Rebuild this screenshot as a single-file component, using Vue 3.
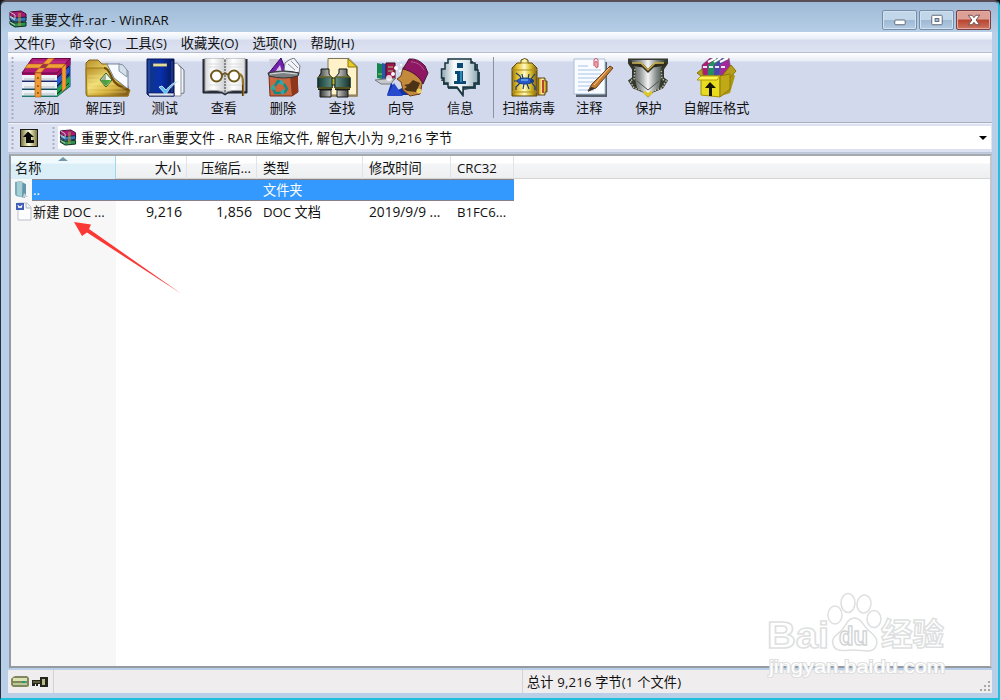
<template>
  <div class="window">
    <header class="titlebar">
      <svg class="app-icon" viewBox="0 0 20 18">
        <use href="#rar-books" />
      </svg>
      <h1 class="title">重要文件.rar - WinRAR</h1>
      <div class="controls">
        <button class="control" aria-label="minimize">
          <svg viewBox="0 0 34 19"><rect x="12" y="9.500" width="11" height="5" rx="1" fill="#fff" stroke="#5a6470" /></svg>
        </button>
        <button class="control" aria-label="maximize">
          <svg viewBox="0 0 34 19">
            <rect x="12" y="4.500" width="11" height="10" rx="1" fill="#fff" stroke="#5a6470" />
            <rect x="15.500" y="8" width="4" height="3" fill="#a9c0da" stroke="#5a6470" />
          </svg>
        </button>
        <button class="control close" aria-label="close">
          <svg viewBox="0 0 34 19">
            <path d="M11.500 4.500h4l2 2.500 2-2.500h4l-3.800 5 3.800 5h-4l-2-2.500-2 2.500h-4l3.800-5z" fill="#fff" stroke="#6b4a4d" />
          </svg>
        </button>
      </div>
    </header>

    <nav class="menu">
      <span v-for="item in menu" :key="item">{{ item }}</span>
    </nav>

    <div class="toolbar">
      <i class="grip"></i>
      <button class="tool">
        <svg viewBox="0 0 56 40">
          <path d="M38 14.500 51.500.5v28L38 39z" fill="#173f91" />
          <path d="M38 14.500 51.500.5v6L38 21z" fill="#9b1268" />
          <path d="m38 21 12-12v5L38 28z" fill="#2059d8" />
          <path d="m38 30 13-12v10L38 39z" fill="#1ca24d" />
          <path d="m38 20 12-12M38 28l12-12M38 36l12-11" stroke="#071829" />
          <path d="M3 15h35v24H3z" fill="#eef2f7" />
          <path d="M3 15h35v2H3z" fill="#a20b68" />
          <path d="M3 22.500h35v1.500H3z" fill="#1d2c70" />
          <path d="M3 30.500h35v1.500H3z" fill="#14485f" />
          <path d="M3 37.500h35v1.500H3z" fill="#237869" />
          <path d="M5 21h31M5 29h31M5 36h31" stroke="#b7bec8" />
          <path d="M13 .5h38.500L38 15H3z" fill="#b11a75" stroke="#690943" />
          <path d="M14 4h33" stroke="#d950a3" opacity=".6" />
          <path d="m29 .5-13 14h6L35 .5zM9 6h37l-3 4H6z" fill="#f0a13a" stroke="#b8660f" stroke-width=".6" />
          <path d="M16 15h6v24h-6zM43 10l4-4v24l-4 4z" fill="#f29b35" stroke="#aa5b15" stroke-width=".6" />
          <g fill="#805012"><circle cx="26" cy="8" r="1.500" /><circle cx="19" cy="20" r="1" /><circle cx="19" cy="28" r="1" /><circle cx="19" cy="35" r="1" /></g>
        </svg>
        添加
      </button>
      <button class="tool">
        <svg viewBox="0 0 56 40">
          <path d="M8 9V5l3-3h9l4 4h6l20 22v10H9l-1-2z" fill="url(#gold)" stroke="#806320" />
          <path d="M29 6h13l8 7v18L36 20z" fill="#f8fbff" stroke="#748396" />
          <path d="M41 6v7l8 6v-7l-4-5z" fill="#d6e0eb" stroke="#8493a2" />
          <path d="M8 10h18c4 0 5 4 8 10 3 7 10 10 18 12l-2 6H9z" fill="url(#gold)" stroke="#997719" />
          <path d="M26 10c4 0 5 4 8 10 3 7 10 10 17 12" fill="none" stroke="#6f4b0c" stroke-width="2" />
          <path d="M10 18h19M10 22h22M10 26h27M10 30h38M10 34h38" stroke="#fff6a8" stroke-width=".6" opacity=".6" />
          <path d="m28 15 6 7-6 7-6-7z" fill="#eefae6" stroke="#315d2b" />
          <path d="M22 22h11l-5 6z" fill="#43ad35" /><path d="m28 16-5 6 5 6z" fill="#648364" opacity=".6" />
        </svg>
        解压到
      </button>
      <button class="tool">
        <svg viewBox="0 0 56 40">
          <path d="m36 8 6-1 5 5v23l-11 2z" fill="#eff4fa" stroke="#69727e" />
          <path d="m34 6 6-1 4 5v28H34z" fill="#fff" stroke="#8c949e" />
          <path d="M10 1h27v37H12l-2-2z" fill="url(#bluebook)" stroke="#061758" />
          <path d="M11 35h26v3H12z" fill="#dfe4ec" stroke="#06175b" stroke-width=".7" />
          <path d="M12 2v32M35 3v31" stroke="#3c63b7" stroke-width=".8" />
          <path d="M16 7h14" stroke="#cabf70" stroke-width="3" /><path d="M17 7h12" stroke="#fff9bd" />
          <path d="m22 29 7 8c3-7 7-10 14-15-6 2-11 6-14 10l-4-4z" fill="#60bef5" stroke="#fff" stroke-width=".7" />
        </svg>
        测试
      </button>
      <button class="tool">
        <svg viewBox="0 0 56 40">
          <path d="M7 1v34h19l3 2 3-2h19V1" fill="#30323b" stroke="#20222b" />
          <path d="M9 0h18l2 2 2-2h18v33q-14-2-20 2-6-4-20-2z" fill="url(#page)" stroke="#9ea1a9" />
          <path d="M29 2v32" stroke="#35363e" stroke-dasharray="2 1" />
          <path d="M11 6h14M11 9h14M11 27h14M33 6h14M33 9h14M33 27h14" stroke="#d9dce0" />
          <g fill="#fff" fill-opacity=".8" stroke="#6d581d" stroke-width="2"><circle cx="20.500" cy="18" r="5.500" /><circle cx="38" cy="18" r="5.500" /><path d="M26 17q3-3 6 0" fill="none" /></g>
          <path d="M43 16q4 0 4 9v13" fill="none" stroke="#91752b" stroke-width="2.200" />
          <path d="M46.500 27v11" stroke="#55410d" />
        </svg>
        查看
      </button>
      <button class="tool">
        <svg viewBox="0 0 56 40">
          <path d="M14 1h11l-9 11z" fill="#cfd0dc" /><path d="m26 0 6 16H13z" fill="#7122ac" stroke="#3c0667" /><path d="m25 7 2 7h-7z" fill="#dfc8ec" />
          <path d="m29 13 1-8 4-3 5-2 6 8-1 7z" fill="#f1f3f8" stroke="#74797e" /><path d="m33 6 7 6M36 3l7 7" stroke="#8793a1" />
          <path d="m14 18 28-1 1 17-6 4H15z" fill="#cb663d" stroke="#70301b" />
          <path d="m35 18 8-2v18l-6 4z" fill="#8e351c" />
          <path d="M13 15q15-4 31 0l-1 3q-14 4-29 0z" fill="#7c8083" stroke="#303337" />
          <path d="M15 16q13-3 27 0" stroke="#d9dfe0" fill="none" />
          <g fill="none" stroke="#138989" stroke-width="2.500"><path d="m20 28 3-5 4 2M29 26l3 5-3 4M26 35h-6l-2-5" /></g>
          <path d="m27 21 2 6-6-1zM18 26l-3 5 6 1zM29 31v6l-4-3z" fill="#26acaa" />
        </svg>
        删除
      </button>
      <button class="tool">
        <svg viewBox="0 0 56 40">
          <path d="M14 .5h21l8 8V37H14z" fill="#fff1c8" stroke="#7e7555" />
          <path d="M34 1v8h9z" fill="#e8cd24" stroke="#8c7710" /><path d="M43 9v29H16" fill="none" stroke="#8c784e" stroke-width="1.500" />
          <path d="M7 11h8v5l3 4v10H4V20l3-5zM25 11h8v5l3 4v10H21V20l4-5z" fill="url(#metal)" stroke="#061512" />
          <path d="M17 20h6v7h-6z" fill="#c8b528" stroke="#262308" />
          <path d="M4 19h14v11H4zM21 19h15v11H21z" fill="url(#binocular)" stroke="#10251f" />
          <path d="M4 29h14v3H4zM21 29h15v3H21z" fill="#171f16" />
          <path d="M6 32h11v7H6zM23 32h11v7H23z" fill="url(#metal)" stroke="#17191b" />
          <path d="M4 19h14M21 19h15M4 30h14M21 30h15" stroke="#91822a" />
        </svg>
        查找
      </button>
      <button class="tool">
        <svg viewBox="0 0 56 40">
          <path d="m4 5 5 1v15l-5-1z" fill="#15854f" /><path d="m9 5 4 1v15H9z" fill="#2955ac" /><path d="M13 5h9v16h-9z" fill="#9d164c" stroke="#3c1020" />
          <path d="M5 16h4M15 9h5M15 13h5" stroke="#a8c974" />
          <path d="m2 22 20-2-4 6H8z" fill="#c7c8cb" stroke="#777a80" />
          <path d="m18 25-4 12h32l3-8-14-2-10 5z" fill="#1231a7" /><path d="m21 25 9 13H14z" fill="#284ace" />
          <path d="M30 10c3-6 16-3 20 11l-3 15-10 2-7-6-2-8-4-3 4-3z" fill="#c38a3b" stroke="#6d3f1d" />
          <path d="m31 27 5-1 4-4 7 3-4 9-9-1-3-2 3-2z" fill="#4c3217" />
          <path d="m30 11 6-10q9-1 16 7l3 7-5 11c-3-7-11-13-20-15z" fill="#8e1662" stroke="#4b1636" />
          <path d="M38 4c6 0 10 3 13 8" stroke="#b15a83" fill="none" /><circle cx="46" cy="33" r="2.500" fill="#edce5c" />
          <g fill="#fff"><circle cx="25" cy="3" r="1" /><circle cx="28" cy="7" r="1" /><circle cx="23" cy="10" r="2" /><circle cx="27" cy="13" r="1" /><circle cx="20" cy="16" r="2" /><circle cx="16" cy="20" r="3" opacity=".8" /></g>
        </svg>
        向导
      </button>
      <button class="tool">
        <svg viewBox="0 0 56 40">
          <path d="M17 3h24v3h5v8h2v13h-4v4h-6l-6 1-1 7-6-8h-9v-4h-5v-4h-2z" fill="#2d4c56" />
          <path d="M16 1h23v4h4v7h3v13h-4v4H31v8l-6-8h-9v-4h-4v-5H9.500v-9H13V5h3z" fill="url(#info)" stroke="#19343e" stroke-width="1.500" />
          <path d="M25 5h6v5h-6zM23 13h8v10h3v3H22v-3h3v-7h-2z" fill="#0b4976" /><path d="M29 13v11" stroke="#2e8cb7" stroke-width="2" />
        </svg>
        信息
      </button>
      <i class="separator"></i>
      <button class="tool scan">
        <svg viewBox="0 0 56 40">
          <path d="M20 2q4-3 7 0v3h4l5 5v28H11V10l5-5h4z" fill="url(#canister)" stroke="#5d4b0b" />
          <path d="M17 5h13M11 12h25M11 34h25" stroke="#a98b24" /><path d="M37 20h7v3h2v11h-2v3h-7z" fill="url(#canister)" stroke="#64431b" /><path d="M42 22v13" stroke="#b84431" stroke-width="2" />
          <g fill="none" stroke="#183b76" stroke-width="1.200"><path d="m15 15 4 3 1 3m-1 4-4 4v3M22 21l-1-5m2 10-1 5M27 21l1-5m-2 10 2 5M30 21l4-5m-3 9 3 4v3M20 23h-7" /></g>
          <ellipse cx="24" cy="23" rx="8" ry="3" fill="#2858ce" stroke="#173d83" /><path d="M20 22h7" stroke="#8bdcf7" /><circle cx="31" cy="23" r="2" fill="#173d83" />
        </svg>
        扫描病毒
      </button>
      <button class="tool">
        <svg viewBox="0 0 56 40">
          <path d="M15 4h31v35H15z" fill="#56616b" /><path d="M13 1h31v35H13z" fill="#f8fbff" stroke="#aac1d6" />
          <path d="M17 8h10M17 12h23M17 16h23M17 20h22M17 24h20M17 28h18M17 32h16" stroke="#a8c4e4" />
          <path d="M33 8V2q2-4 4 0v7q-2 2-3-1V4q2-2 2 1v4" fill="none" stroke="#d14f5d" />
          <path d="m49 8 3 2-17 20-8 3 4-7z" fill="#c47c32" stroke="#65401d" /><path d="m33 27 15-17" stroke="#ffd291" /><path d="m30 29 4 1-7 4z" fill="#30302f" />
        </svg>
        注释
      </button>
      <button class="tool">
        <svg viewBox="0 0 56 40">
          <path d="M8 .5h40v5l-4 6v8l4 3-5 8-10 4-5 5-5-5-10-4-5-8 4-3v-8l-4-6z" fill="#34382e" />
          <path d="M11 2h34l-5 10 1 8-2 10-11 7-11-7-2-10 1-8z" fill="url(#shield)" />
          <path d="m10 6 13 2 5 5 5-5 13-2" fill="none" stroke="#302c1c" stroke-width="3" /><path d="M12 5h9l7 7 7-7h9" fill="none" stroke="#c8ac48" stroke-width="1.500" />
          <path d="m15 11-1 10-4 2 4 7 9 3 5 5 5-5 9-3 4-7-4-2-1-10" fill="none" stroke="#b9bda4" stroke-width="1.500" stroke-dasharray="1.500 1.500" />
          <path d="m17 23 11 9 11-9" fill="none" stroke="#4c514d" />
          <path d="m24 34 4 3 4-3" stroke="#ddc827" stroke-width="3" fill="none" />
        </svg>
        保护
      </button>
      <button class="tool sfx">
        <svg viewBox="0 0 56 40">
          <path d="m14 17 26-6 7 7-5 17-12 4-17-2z" fill="#aa9610" />
          <g stroke="#6b5a70" stroke-width=".6"><path d="m14 7 8-7 6 2-9 16h-5z" fill="#a71e77" /><path d="m20 7 8-7 5 2-8 16h-5z" fill="#1d9260" /><path d="m26 7 8-7 5 2-8 16h-5z" fill="#4b44af" /><path d="m32 7 9-7 2 12-7 6h-4z" fill="#a3299a" /></g>
          <path d="m20 4 8-4M26 4l7-4M32 4l8-4" stroke="#fff" stroke-width="2" /><path d="M15 9h4M21 9h4M27 9h4M33 9h4" stroke="#e6e8fa" stroke-width="2" />
          <path d="m13 18-4-3 5-4 1 6zM34 18l9-11 5 6-7 8z" fill="#b69d1b" stroke="#897708" />
          <path d="M13 18h19v21l-19-2z" fill="#e9dc1f" stroke="#a59405" /><path d="m32 18 10-2v15l-10 8z" fill="#c0a916" stroke="#8e7a0c" />
          <path d="m9 22 4-4h19l-3 4z" fill="#fff34d" stroke="#b0990d" /><path d="m22 24 6 6h-4v8h-3v-8h-4z" fill="#171608" />
        </svg>
        自解压格式
      </button>
    </div>

    <div class="addressbar">
      <i class="grip"></i>
      <button class="up" aria-label="up">
        <svg viewBox="0 0 18 18">
          <path d="M0 0h18v18H0z" fill="url(#upfill)" stroke="#191b13" stroke-width="2" />
          <path d="m8 2.500-5 5.500h3v6h8v-3h-3V8h3z" fill="#090a06" />
        </svg>
      </button>
      <i class="grip"></i>
      <div class="path">
        <svg viewBox="0 0 20 18"><use href="#rar-books" /></svg>
        <span>重要文件.rar\重要文件 - RAR 压缩文件, 解包大小为 9,216 字节</span>
        <i class="dropdown"></i>
      </div>
    </div>

    <main class="list">
      <div class="columns header">
        <span v-for="(column, i) in columns" :key="column" :class="{ number: i === 1 || i === 2 }">{{ column }}</span>
        <i class="sort-mark"></i>
      </div>
      <div class="columns row selected">
        <span class="name">
          <svg class="file-icon" viewBox="0 0 20 20">
            <path d="m3 3 6-1 4 3v14l-9-2-1-2z" fill="#76aebb" /><path d="m5 3 5-1v16l-5-2z" fill="#a6ced4" /><path d="m11 4 3 1v12l-4 1z" fill="#6298aa" /><path d="m12 14 4 4h-5z" fill="#c6d1d5" />
          </svg>
          <b>..</b>
        </span>
        <span class="number"></span><span class="number"></span><span>文件夹</span><span></span><span></span>
      </div>
      <div class="columns row">
        <span class="name">
          <svg class="file-icon" viewBox="0 0 20 20">
            <path d="M6 2h9l4 4v13H6z" fill="#fcfdff" stroke="#bbc1cb" /><path d="M14 2v5h5" fill="#edf0f4" stroke="#b0b6c2" /><path d="M4 2h8v7H4z" fill="#405fb7" /><path d="m6 4 1 3 1-2 1 2 1-3" stroke="#fff" fill="none" />
          </svg>
          <b>新建 DOC ...</b>
        </span>
        <span class="number">9,216</span><span class="number">1,856</span><span>DOC 文档</span><span class="date">2019/9/9 ...</span><span>B1FC6...</span>
      </div>
      <div class="sorted-column"></div>
    </main>

    <footer class="status">
      <div class="status-icons">
        <svg viewBox="0 0 42 16">
          <path d="m3 3 2-1h12l2 2v8l-2 1H3l-2-2V5z" fill="#82885c" /><path d="M3 4h14v3H3z" fill="#dde2b4" /><path d="M3 9h14v2H3z" fill="#b8c995" /><path d="M12 8h3" stroke="#14a27c" stroke-width="2" />
          <path d="M22 6h8V3h8v10h-8v-3h-2v2h-2v-2h-1v2h-3z" fill="#24251c" /><path d="M32 5h3v6h-3z" fill="#b9bd85" /><path d="M23 8h7" stroke="#9f9560" />
        </svg>
      </div>
      <div class="status-left"></div>
      <div class="status-text">总计 9,216 字节(1 个文件)</div>
      <svg class="resize" viewBox="0 0 12 12"><path d="M9 1h2v2H9zM5 5h2v2H5zM9 5h2v2H9zM1 9h2v2H1zM5 9h2v2H5zM9 9h2v2H9z" fill="#aaa7a7" /></svg>
    </footer>

    <svg class="pointer" viewBox="0 0 110 75"><path d="m0 0 17 2.500-2 4.500 92 64.500L13 10.500 8 14z" fill="#fa3937" /></svg>

    <svg class="watermark" viewBox="0 0 184 92">
      <g class="mark">
        <text x="1" y="58" font-size="37" textLength="62" lengthAdjust="spacingAndGlyphs">Bai</text>
        <ellipse cx="69" cy="25" rx="7" ry="9" /><ellipse cx="82" cy="13" rx="7" ry="9.500" /><ellipse cx="98" cy="14" rx="7" ry="9" transform="rotate(8 98 14)" /><ellipse cx="108" cy="29" rx="7" ry="8.500" />
        <path d="M88 28c7 0 9 7 14 12 6 5 11 9 8 16-3 8-13 4-22 4s-19 3-21-6c-2-7 4-9 9-14 4-5 6-12 12-12z" />
        <text class="du" x="73" y="55" font-size="25" textLength="29" lengthAdjust="spacingAndGlyphs">du</text>
        <text class="chinese" x="115" y="55" font-size="31" textLength="63" lengthAdjust="spacingAndGlyphs">经验</text>
        <text class="site" x="3" y="83" font-size="18" textLength="176" lengthAdjust="spacingAndGlyphs">jingyan.baidu.com</text>
      </g>
    </svg>

    <svg class="defs" aria-hidden="true">
      <defs>
        <g id="rar-books">
          <path d="m2 2 11-1 5 3v4L7 9 2 6z" fill="#a91872" stroke="#410a2e" />
          <path d="m2 6 5 2 11-1v4L7 12 2 10z" fill="#3474b9" stroke="#11263f" />
          <path d="m2 11 5 2 11-1v4L7 17l-5-3z" fill="#2c9352" stroke="#092c18" />
          <path d="m2 2 5 3v4L2 6M2 7l5 3M2 12l5 3" stroke="#c3c8cc" fill="none" /><path d="M10 3h3v13h-3z" fill="#b79a4b" fill-opacity=".55" />
        </g>
        <linearGradient id="gold" x2=".8" y2="1"><stop stop-color="#b88d26" /><stop offset=".45" stop-color="#f0dd74" /><stop offset=".75" stop-color="#cfa935" /><stop offset="1" stop-color="#86611c" /></linearGradient>
        <linearGradient id="bluebook" x2="1"><stop stop-color="#123580" /><stop offset=".5" stop-color="#0830ad" /><stop offset="1" stop-color="#061759" /></linearGradient>
        <linearGradient id="page"><stop stop-color="#d6d7d9" /><stop offset=".2" stop-color="#fff" /><stop offset=".48" stop-color="#d1d2d4" /><stop offset=".7" stop-color="#fff" /><stop offset="1" stop-color="#dedee0" /></linearGradient>
        <linearGradient id="metal"><stop stop-color="#313333" /><stop offset=".5" stop-color="#f4f4ed" /><stop offset="1" stop-color="#414342" /></linearGradient>
        <linearGradient id="binocular"><stop stop-color="#153b35" /><stop offset=".5" stop-color="#6a9990" /><stop offset="1" stop-color="#16332e" /></linearGradient>
        <linearGradient id="info"><stop stop-color="#91a7b2" /><stop offset=".35" stop-color="#fafdff" /><stop offset=".7" stop-color="#dce5eb" /><stop offset="1" stop-color="#91a9b4" /></linearGradient>
        <linearGradient id="canister"><stop stop-color="#977416" /><stop offset=".2" stop-color="#e1bd28" /><stop offset=".5" stop-color="#fffac0" /><stop offset=".75" stop-color="#d6ba26" /><stop offset="1" stop-color="#7f6016" /></linearGradient>
        <linearGradient id="shield"><stop stop-color="#474f4e" /><stop offset=".25" stop-color="#8f9492" /><stop offset=".5" stop-color="#f4f4f4" /><stop offset=".75" stop-color="#858c89" /><stop offset="1" stop-color="#37423c" /></linearGradient>
        <linearGradient id="upfill"><stop stop-color="#67602c" /><stop offset=".5" stop-color="#ffffda" /><stop offset="1" stop-color="#706830" /></linearGradient>
      </defs>
    </svg>
  </div>
</template>

<script setup>
const menu = ['文件(F)', '命令(C)', '工具(S)', '收藏夹(O)', '选项(N)', '帮助(H)'];
const columns = ['名称', '大小', '压缩后...', '类型', '修改时间', 'CRC32'];
</script>

<style>
body {
  margin: 0;
  background: #10171f;
}
</style>

<style scoped>
* {
  box-sizing: border-box;
}

.window {
  position: relative;
  width: 1000px;
  height: 700px;
  padding: 0 6px 8px 7px;
  display: flex;
  flex-direction: column;
  border: 1px solid #25313d;
  border-top: 2px solid #594e55;
  border-right: 2px solid #20c0df;
  border-bottom: 2px solid #20bfdc;
  border-radius: 6px 6px 0 0;
  background: linear-gradient(#9eb9d6, #b8cfe7 32px, #b8cfe7 60px, #b9cfe8);
  font: 13.200px/20px "Open Sans", "Noto Sans CJK SC", sans-serif;
  color: #111;
  overflow: hidden;
}

.window > * {
  flex-shrink: 0;
}

button {
  padding: 0;
  border: 0;
  background: none;
  font: inherit;
  color: inherit;
}

svg {
  display: block;
}

.titlebar {
  height: 30px;
  display: flex;
  align-items: flex-start;
}

.app-icon {
  width: 20px;
  height: 18px;
  margin-top: 8px;
}

.title {
  margin: 8px 0 0 3px;
  font-size: 13.200px;
  font-weight: 400;
  line-height: 20px;
  letter-spacing: 0.250px;
}

.controls {
  display: flex;
  gap: 2px;
  margin: 8px 1px 0 auto;
}

.control {
  width: 35px;
  height: 20px;
  border: 1px solid #758da6;
  border-radius: 2px;
  background: linear-gradient(#c2d6ea 48%, #9db8d3 50%, #b4cce3);
  box-shadow: inset 0 0 0 1px #d2e1ef;
}

.control svg {
  width: 33px;
  height: 18px;
}

.close {
  border-color: #773e43;
  background: linear-gradient(#dda097 45%, #b9442f 50%, #cb7560);
  box-shadow: inset 0 0 0 1px #e5aba3;
}

.menu {
  height: 20px;
  padding: 1px 6px;
  display: flex;
  gap: 14px;
  background: linear-gradient(#fcfdff, #e8edf7 7px, #d5dbed 8px, #dee3f2);
}

.toolbar {
  height: 71px;
  display: flex;
  border-top: 1px solid #b7bdcf;
  border-bottom: 1px solid #a9afbd;
  background: linear-gradient(#fff 0, #e7ebf6 8px, #d3d9ed 9px, #d3d9ed);
}

.grip {
  width: 3px;
  margin: 3px;
  background: radial-gradient(circle, #a4acbf 1px, transparent 1.200px) 0 0 / 3px 4px;
}

.tool {
  width: 59.100px;
  padding-top: 5px;
  display: flex;
  flex-direction: column;
  align-items: center;
  line-height: 20px;
  white-space: nowrap;
}

.tool svg {
  width: 56px;
  height: 40px;
}

.separator {
  width: 1px;
  margin: 4px 4px 4px 3px;
  background: #8c929f;
}

.scan {
  width: 62px;
}

.sfx {
  width: 77px;
}

.addressbar {
  height: 30px;
  padding: 2px 0 3px;
  display: flex;
  align-items: stretch;
  border-top: 1px solid #f1f3fc;
  border-bottom: 1px solid #c1c5d3;
  background: #dce2f2;
}

.addressbar .grip {
  margin-top: 0;
  margin-bottom: 0;
}

.up {
  width: 32px;
  padding-left: 3px;
}

.up svg {
  width: 18px;
  height: 18px;
}

.path {
  flex: 1;
  display: flex;
  align-items: center;
  background: #fff;
  border-right: 1px solid #e3e5e8;
}

.path span {
  letter-spacing: 0.200px;
}

.path svg {
  width: 20px;
  height: 17px;
  margin-right: 3px;
}

.dropdown {
  margin: 0 4px 0 auto;
  border: 4px solid transparent;
  border-top: 4px solid #000;
  border-bottom: 0;
}

.list {
  position: relative;
  height: 514px;
  display: flex;
  flex-direction: column;
  margin: 1px 0 0 1px;
  border: 2px solid #9599a1;
  border-top: 2px solid #a8a9ab;
  border-right: 2px solid #c3c6ca;
  background: #fff;
}

.columns {
  display: grid;
  grid-template-columns: 105px 71px 70px 106px 88px 63px 1fr;
  height: 22px;
  line-height: 22px;
}

.columns > span {
  padding: 0 6px;
  white-space: nowrap;
}

.columns .number {
  padding-right: 5px;
  text-align: right;
}

.row .number {
  font-size: 14.200px;
}

.row .date {
  font-size: 13.700px;
}

.header {
  height: 23px;
  line-height: 24px;
  background: linear-gradient(#fff 7px, #f4f5f6 8px, #eeeff1);
  border-bottom: 1px solid #d5d5d5;
}

.header > span {
  border-right: 1px solid #e1e3e6;
}

.header > span:first-child {
  padding-left: 4px;
  background: linear-gradient(#f0f9fd 7px, #dceff9 8px, #d9eef8);
  border-color: #a5d5e8;
}

.sort-mark {
  position: absolute;
  top: 1px;
  left: 47px;
  border: 5px solid transparent;
  border-top: 0;
  border-bottom: 4px solid #7599aa;
}

.columns > .name {
  display: flex;
  padding: 0 0 0 1px;
  background: #f7f7f7;
}

.name b {
  flex: 1;
  font-weight: 400;
  padding-left: 1px;
}

.file-icon {
  width: 20px;
  height: 20px;
}

.selected > span:nth-child(n + 2):nth-child(-n + 6),
.selected b {
  background: #3399fe;
  color: #fff;
  border-top: 1px solid #88818a;
  border-bottom: 1px solid #88818a;
}

.selected {
  line-height: 20px;
}

.sorted-column {
  flex: 1;
  width: 105px;
  background: #f7f7f7;
}

.status {
  height: 23px;
  margin-top: 2px;
  display: flex;
  background: #f0edee;
}

.status-icons {
  width: 46px;
  padding: 4px 0 0 2px;
  border-right: 1px solid #d4d2d2;
}

.status-icons svg {
  width: 42px;
  height: 16px;
}

.status-left {
  width: 469px;
  border-right: 1px solid #d4d2d2;
}

.status-text {
  padding: 2px 4px;
  letter-spacing: 0.150px;
}

.resize {
  width: 12px;
  height: 12px;
  margin: 10px 1px 0 auto;
}

.pointer {
  position: absolute;
  left: 73px;
  top: 220px;
  width: 110px;
  height: 75px;
}

.watermark {
  position: absolute;
  left: 765px;
  top: 588px;
  width: 184px;
  height: 92px;
}

.mark {
  fill: #fff;
  stroke: #dedfe0;
  stroke-width: 1.500px;
  font-family: "Liberation Sans", sans-serif;
  font-weight: 700;
}

.du {
  stroke: #d3d4d5;
}

.chinese {
  font-family: "Noto Sans CJK SC", sans-serif;
}

.site {
  font-weight: 400;
  stroke-width: 2px;
  paint-order: stroke;
}

.defs {
  position: absolute;
  width: 0;
  height: 0;
}
</style>
